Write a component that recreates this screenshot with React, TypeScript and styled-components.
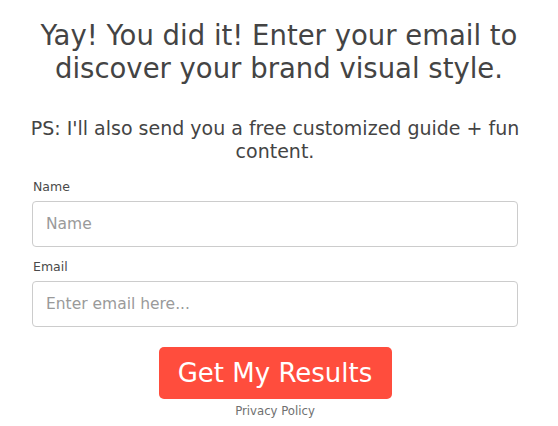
import styled, { createGlobalStyle } from "styled-components";

const GlobalStyle = createGlobalStyle`
  body {
    margin: 0;
    background: #ffffff;
    font-family: "DejaVu Sans", "Open Sans", sans-serif;
    color: #333333;
  }
`;

export default function App() {
  return (
    <>
      <GlobalStyle />
      <Page>
        <Heading>
          Yay! You did it! Enter your email to discover your brand visual style.
        </Heading>
        <Subheading>
          PS: I'll also send you a free customized guide + fun content.
        </Subheading>
        <Form onSubmit={(e) => e.preventDefault()}>
          <Field>
            <Label>Name</Label>
            <Input type="text" placeholder="Name" />
          </Field>
          <Field>
            <Label>Email</Label>
            <Input type="email" placeholder="Enter email here..." />
          </Field>
          <Actions>
            <SubmitButton type="submit">Get My Results</SubmitButton>
            <Privacy href="#">Privacy Policy</Privacy>
          </Actions>
        </Form>
      </Page>
    </>
  );
}

const Page = styled.div`
  width: 558px;
  height: 426px;
  box-sizing: border-box;
  padding-top: 19px;
  display: flex;
  flex-direction: column;
`;

const Heading = styled.h1`
  margin: 0;
  padding: 0 8px;
  text-align: center;
  font-size: 27.5px;
  font-weight: 400;
  line-height: 33px;
  color: #444444;
`;

const Subheading = styled.p`
  margin: 32px 0 0 0;
  padding: 0 30px 0 22px;
  text-align: center;
  font-size: 19px;
  font-weight: 400;
  line-height: 23px;
  color: #444444;
`;

const Form = styled.form`
  margin: 16px 40px 0 32px;
  display: flex;
  flex-direction: column;
  gap: 12px;
`;

const Field = styled.div`
  display: flex;
  flex-direction: column;
  gap: 6px;
`;

const Label = styled.label`
  font-size: 12.5px;
  line-height: 16px;
  color: #4a4a4a;
  padding-left: 1px;
`;

const Input = styled.input`
  box-sizing: border-box;
  width: 100%;
  height: 46px;
  border: 1px solid #cccccc;
  border-radius: 4px;
  padding: 0 13px;
  font-family: inherit;
  font-size: 15.5px;
  color: #333333;
  outline: none;

  &::placeholder {
    color: #9a9a9a;
  }
`;

const Actions = styled.div`
  margin-top: 8px;
  display: flex;
  flex-direction: column;
  align-items: center;
  gap: 5px;
`;

const SubmitButton = styled.button`
  width: 233px;
  height: 52px;
  border: none;
  border-radius: 5px;
  background: #ff4d3d;
  color: #ffffff;
  font-family: inherit;
  font-size: 26px;
  cursor: pointer;
`;

const Privacy = styled.a`
  font-size: 11.7px;
  line-height: 14px;
  color: #707070;
  text-decoration: none;
`;
